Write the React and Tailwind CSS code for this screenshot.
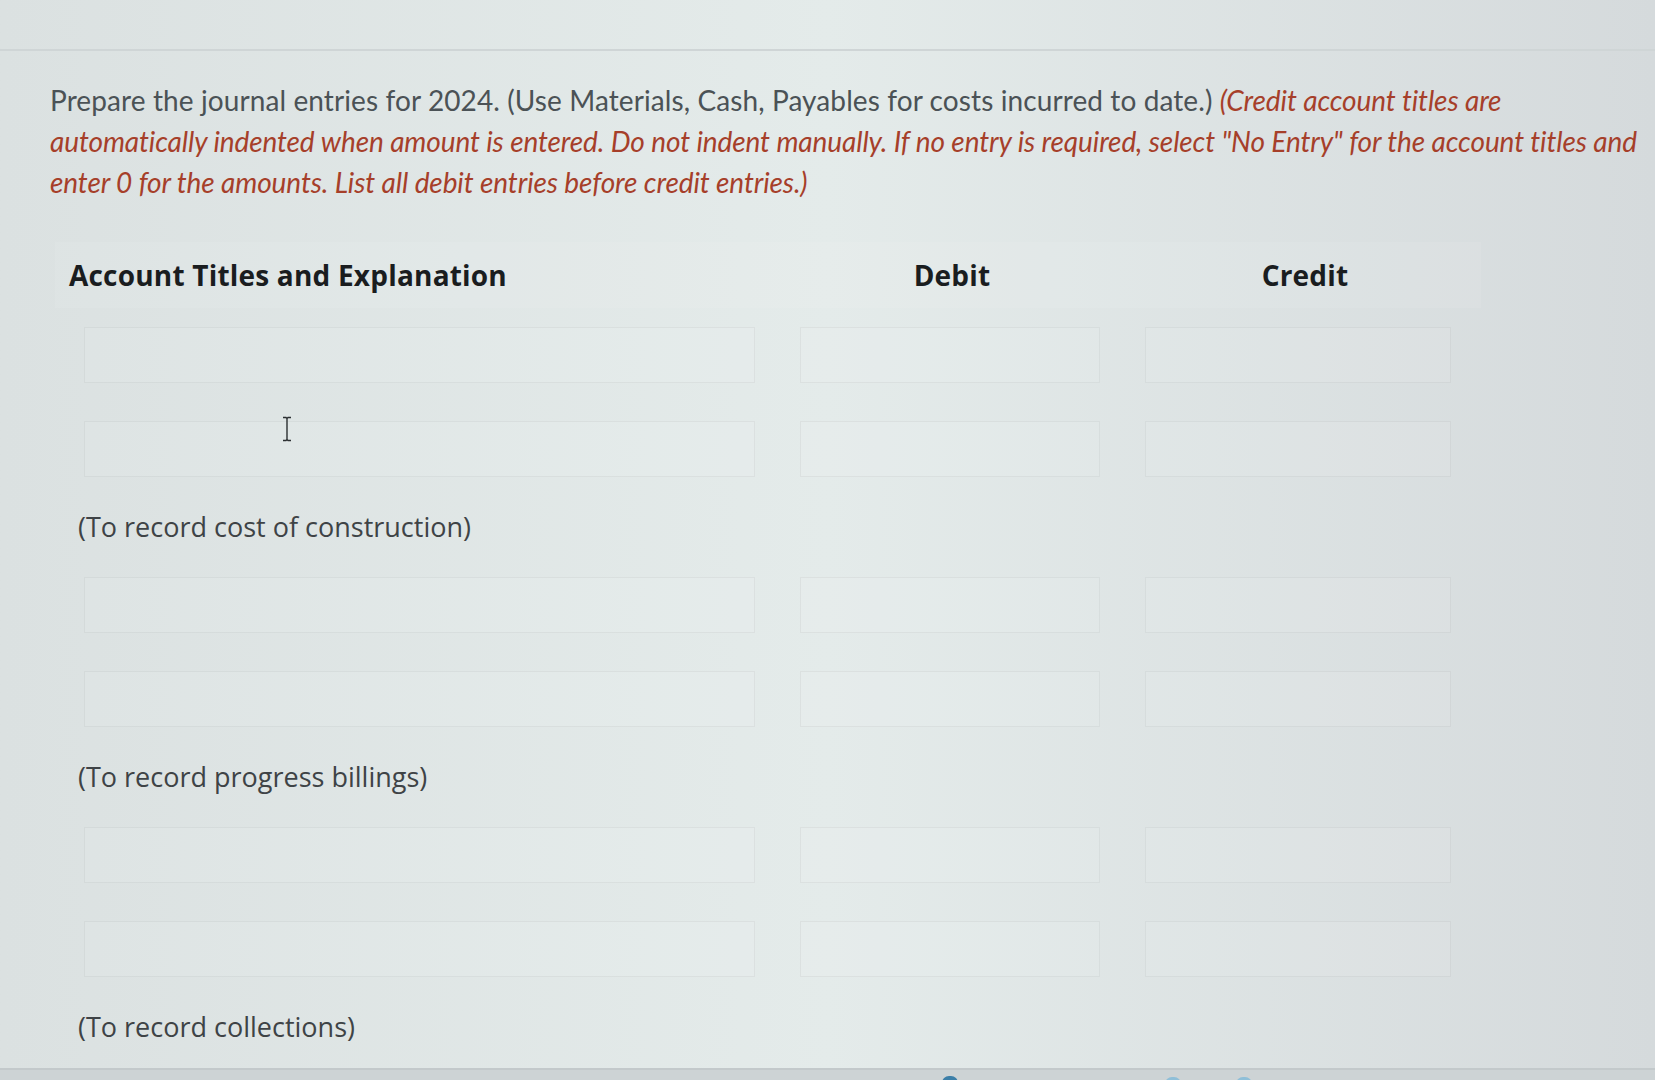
import React from 'react'

const groups = [
  { label: '(To record cost of construction)' },
  { label: '(To record progress billings)' },
  { label: '(To record collections)' },
]

function EntryRow() {
  return (
    <div className="grid grid-cols-[671px_300px_306px] gap-x-[45px] pl-[84px]">
      <div className="h-[56px] border border-black/[0.045] bg-white/[0.07]" />
      <div className="h-[56px] border border-black/[0.045] bg-white/[0.07]" />
      <div className="h-[56px] border border-black/[0.045] bg-white/[0.07]" />
    </div>
  )
}

export default function App() {
  return (
    <div className="relative flex h-[1080px] w-[1655px] flex-col overflow-hidden bg-linear-to-r from-[#dbe1e1] via-[#e4ebea] to-[#d5dadc]">
      <div className="h-[51px] shrink-0 border-b-2 border-[#cfd5d6]" />

      <div className="pl-[50px] pt-[29px] font-['Lato',sans-serif] text-[28px] leading-[41px] tracking-[0.1px] text-[#4b5256] whitespace-nowrap">
        Prepare the journal entries for 2024. (Use Materials, Cash, Payables for costs incurred to date.){' '}
        <i className="tracking-[-0.1px] text-[#a63f2a]">(Credit account titles are</i>
        <br />
        <i className="tracking-[-0.1px] text-[#a63f2a]">automatically indented when amount is entered. Do not indent manually. If no entry is required, select "No Entry" for the account titles and</i>
        <br />
        <i className="tracking-[-0.1px] text-[#a63f2a]">enter 0 for the amounts. List all debit entries before credit entries.)</i>
      </div>

      <div className="ml-[55px] mt-[39px] grid h-[66px] w-[1426px] grid-cols-[700px_300px_306px] items-center gap-x-[45px] bg-white/[0.08] font-['Open_Sans',sans-serif] text-[28px] font-bold tracking-[0.2px] text-[#1a1d1f]">
        <span className="pl-[14px]">Account Titles and Explanation</span>
        <span className="pl-[4px] text-center">Debit</span>
        <span className="pl-[14px] text-center">Credit</span>
      </div>

      <div className="mt-[19px] flex flex-col">
        {groups.map((group) => (
          <div key={group.label} className="flex flex-col">
            <EntryRow />
            <div className="mt-[38px]">
              <EntryRow />
            </div>
            <div className="mb-[30px] mt-[30px] h-[40px] pl-[78px] font-['Open_Sans',sans-serif] text-[27px] leading-[40px] text-[#3e4346]">
              {group.label}
            </div>
          </div>
        ))}
      </div>

      <div className="absolute bottom-0 left-0 h-[12px] w-full border-t-2 border-[#c3c9cb] bg-[#cdd3d5]">
        <span className="absolute left-[942px] top-[6px] h-[14px] w-[16px] rounded-full bg-[#3c7fa8]" />
        <span className="absolute left-[1165px] top-[7px] h-[14px] w-[16px] rounded-full bg-[#8fbfd8]" />
        <span className="absolute left-[1236px] top-[7px] h-[14px] w-[16px] rounded-full bg-[#8fbfd8]" />
      </div>

      <svg className="absolute left-[281px] top-[416px]" width="12" height="26" viewBox="0 0 12 26" fill="none">
        <path d="M2 1.5h3l1 1 1-1h3M6 2.5v21M2 24.5h3l1-1 1 1h3" stroke="#2b2f31" strokeWidth="1.4" />
      </svg>
    </div>
  )
}
